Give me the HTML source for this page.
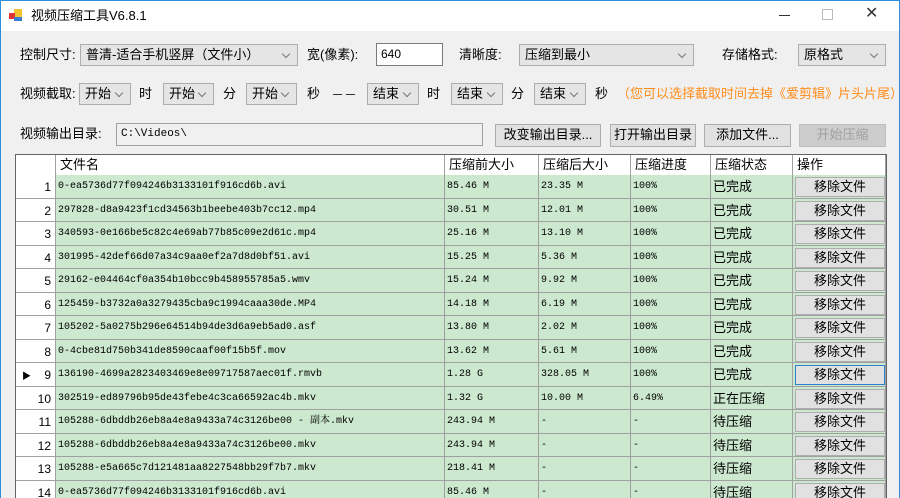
<!DOCTYPE html>
<html><head><meta charset="utf-8"><style>
*{box-sizing:border-box;margin:0;padding:0}
body{width:900px;height:498px;overflow:hidden;background:#f0f0f0;font-family:"Liberation Sans","Microsoft YaHei","Noto Sans CJK SC",sans-serif;font-size:13px;color:#000;position:relative}
.a{position:absolute;white-space:nowrap;line-height:20px}
.tb{left:0;top:0;width:900px;height:31px;background:#fff}
.cb{position:absolute;height:22px;background:#e5e5e5;border:1px solid #adadad;padding:0 0 0 5px;line-height:20px;font-size:13px}
.cb::after{content:"";position:absolute;right:8px;top:6px;width:5px;height:5px;border-right:1px solid #777;border-bottom:1px solid #777;transform:rotate(45deg)}
.in{position:absolute;height:23px;background:#fff;border:1px solid #7a7a7a;padding:0 4px;line-height:21px;font-size:12px}
.bt{position:absolute;height:23px;background:#e1e1e1;border:1px solid #adadad;text-align:center;line-height:20px;font-size:13px}
.grid{position:absolute;left:15px;top:154px;width:872px;height:344px;border:1px solid #646464;border-bottom:none;background:#fff;overflow:hidden}
.row{position:absolute;left:0;width:870px}
.c{position:absolute;top:0;height:100%;border-right:1px solid #a0a0a0;border-bottom:1px solid #a0a0a0;background:#cce8cf;font-family:"Liberation Mono","Noto Serif CJK SC",monospace;font-size:10px;line-height:12px;padding:6px 0 0 2px;white-space:nowrap;overflow:hidden}
.cn{font-family:"Liberation Sans","Noto Sans CJK SC",sans-serif;font-size:13px;line-height:16px;padding-top:4px}
.rh{position:absolute;left:0;width:40px;height:100%;background:#fff;border-right:1px solid #a0a0a0;border-bottom:1px solid #a0a0a0;text-align:right;padding:5px 4px 0 0;font-size:12px;line-height:14px}
.h{position:absolute;top:0;height:21px;border-right:1px solid #a0a0a0;border-bottom:1px solid #a0a0a0;background:#fff;padding:0 0 0 4px;line-height:20px;font-size:13px}
.rb{position:absolute;top:2px;height:20px;background:#e1e1e1;border:1px solid #adadad;text-align:center;font-size:13px;line-height:18px;font-family:"Liberation Sans","Noto Sans CJK SC",sans-serif}
</style></head><body>
<div class="a tb"></div>
<div class="a" style="left:0;top:0;width:1px;height:498px;background:#2b90d9"></div>
<div class="a" style="left:899px;top:0;width:1px;height:498px;background:#2b90d9"></div>
<div class="a" style="left:0;top:0;width:900px;height:1px;background:#2b90d9"></div>
<svg class="a" style="left:9px;top:9px" width="14" height="13"><rect x="5" y="0" width="8" height="8" fill="#f4c430"/><rect x="0" y="4" width="6" height="6" fill="#d33"/><rect x="5" y="8" width="8" height="4" fill="#3a7bd5"/></svg>
<div class="a" style="left:31px;top:6px;font-size:13px">视频压缩工具V6.8.1</div>
<div class="a" style="left:779px;top:15px;width:11px;height:1px;background:#333"></div>
<div class="a" style="left:822px;top:9px;width:11px;height:11px;border:1px solid #bbb"></div>
<div class="a" style="left:865px;top:4px;font-size:16px;color:#333">✕</div>

<div class="a" style="left:20px;top:45px">控制尺寸:</div>
<div class="cb" style="left:80px;top:44px;width:218px">普清-适合手机竖屏（文件小）</div>
<div class="a" style="left:307px;top:45px">宽(像素):</div>
<div class="in" style="left:376px;top:43px;width:67px">640</div>
<div class="a" style="left:459px;top:45px">清晰度:</div>
<div class="cb" style="left:519px;top:44px;width:175px">压缩到最小</div>
<div class="a" style="left:722px;top:45px">存储格式:</div>
<div class="cb" style="left:798px;top:44px;width:88px">原格式</div>

<div class="a" style="left:20px;top:84px">视频截取:</div>
<div class="cb" style="left:79px;top:83px;width:52px">开始</div>
<div class="a" style="left:139px;top:84px">时</div>
<div class="cb" style="left:163px;top:83px;width:51px">开始</div>
<div class="a" style="left:223px;top:84px">分</div>
<div class="cb" style="left:246px;top:83px;width:51px">开始</div>
<div class="a" style="left:307px;top:84px">秒</div>
<div class="a" style="left:333px;top:94px;width:9px;height:1px;background:#333"></div>
<div class="a" style="left:346px;top:94px;width:9px;height:1px;background:#333"></div>
<div class="cb" style="left:367px;top:83px;width:52px">结束</div>
<div class="a" style="left:427px;top:84px">时</div>
<div class="cb" style="left:451px;top:83px;width:52px">结束</div>
<div class="a" style="left:511px;top:84px">分</div>
<div class="cb" style="left:534px;top:83px;width:52px">结束</div>
<div class="a" style="left:595px;top:84px">秒</div>
<div class="a" style="left:617px;top:84px;color:#ff8c1a">（您可以选择截取时间去掉《爱剪辑》片头片尾）</div>

<div class="a" style="left:20px;top:124px">视频输出目录:</div>
<div class="in" style="left:116px;top:123px;width:367px;font-family:'Liberation Mono',monospace;font-size:11px;background:#f0f0f0;border-color:#a0a0a0">C:\Videos\</div>
<div class="bt" style="left:495px;top:124px;width:106px">改变输出目录...</div>
<div class="bt" style="left:610px;top:124px;width:86px">打开输出目录</div>
<div class="bt" style="left:704px;top:124px;width:87px">添加文件...</div>
<div class="bt" style="left:799px;top:124px;width:87px;background:#ccc;border-color:#bfbfbf;color:#a0a0a0">开始压缩</div>

<div class="grid">
<div class="h" style="left:0;width:40px"></div>
<div class="h" style="left:40px;width:389px">文件名</div>
<div class="h" style="left:429px;width:94px">压缩前大小</div>
<div class="h" style="left:523px;width:92px">压缩后大小</div>
<div class="h" style="left:615px;width:80px">压缩进度</div>
<div class="h" style="left:695px;width:82px">压缩状态</div>
<div class="h" style="left:777px;width:93px">操作</div>
<div id="rows"></div>
</div>
<script>
var d=[
["0-ea5736d77f094246b3133101f916cd6b.avi","85.46 M","23.35 M","100%","已完成"],
["297828-d8a9423f1cd34563b1beebe403b7cc12.mp4","30.51 M","12.01 M","100%","已完成"],
["340593-0e166be5c82c4e69ab77b85c09e2d61c.mp4","25.16 M","13.10 M","100%","已完成"],
["301995-42def66d07a34c9aa0ef2a7d8d0bf51.avi","15.25 M","5.36 M","100%","已完成"],
["29162-e04464cf0a354b10bcc9b458955785a5.wmv","15.24 M","9.92 M","100%","已完成"],
["125459-b3732a0a3279435cba9c1994caaa30de.MP4","14.18 M","6.19 M","100%","已完成"],
["105202-5a0275b296e64514b94de3d6a9eb5ad0.asf","13.80 M","2.02 M","100%","已完成"],
["0-4cbe81d750b341de8590caaf00f15b5f.mov","13.62 M","5.61 M","100%","已完成"],
["136190-4699a2823403469e8e09717587aec01f.rmvb","1.28 G","328.05 M","100%","已完成"],
["302519-ed89796b95de43febe4c3ca66592ac4b.mkv","1.32 G","10.00 M","6.49%","正在压缩"],
["105288-6dbddb26eb8a4e8a9433a74c3126be00 - 副本.mkv","243.94 M","-","-","待压缩"],
["105288-6dbddb26eb8a4e8a9433a74c3126be00.mkv","243.94 M","-","-","待压缩"],
["105288-e5a665c7d121481aa8227548bb29f7b7.mkv","218.41 M","-","-","待压缩"],
["0-ea5736d77f094246b3133101f916cd6b.avi","85.46 M","-","-","待压缩"]];
var h="";
for(var i=0;i<d.length;i++){var t=Math.round(20+i*23.5),hh=Math.round(20+(i+1)*23.5)-t,r=d[i];
h+='<div class="row" style="top:'+t+'px;height:'+hh+'px"><div class="rh">'+(i==8?'<span style="position:absolute;left:6px;font-size:9px;top:6px">▶</span>':'')+(i+1)+'</div>'+
'<div class="c" style="left:40px;width:389px">'+r[0]+'</div>'+
'<div class="c" style="left:429px;width:94px">'+r[1]+'</div>'+
'<div class="c" style="left:523px;width:92px">'+r[2]+'</div>'+
'<div class="c" style="left:615px;width:80px">'+r[3]+'</div>'+
'<div class="c cn" style="left:695px;width:82px">'+r[4]+'</div>'+
'<div class="c" style="left:777px;width:93px"></div>'+
'<div class="rb" style="left:779px;width:90px;'+(i==8?'border-color:#2b7fd0;':'')+'">移除文件</div></div>';}
document.getElementById("rows").innerHTML=h;
</script>
</body></html>
